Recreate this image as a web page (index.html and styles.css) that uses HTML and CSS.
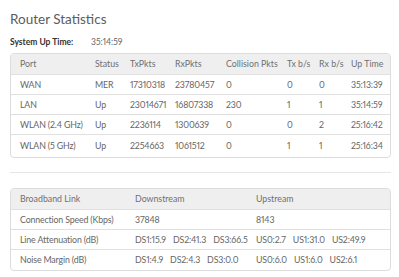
FILE: index.html
```html
<!DOCTYPE html>
<html>
<head>
<meta charset="utf-8">
<link rel="stylesheet" href="styles.css">
</head>
<body>
<div class="page">
  <h1 class="title">Router Statistics</h1>
  <div class="uptime"><span class="uptime-label">System Up Time:</span><span class="uptime-value num">35:14:59</span></div>
  <div class="box">
    <table class="grid ports">
      <colgroup>
        <col class="c1"><col class="c2"><col class="c3"><col class="c4"><col class="c5"><col class="c6"><col class="c7"><col class="c8">
      </colgroup>
      <thead>
        <tr><th>Port</th><th>Status</th><th>TxPkts</th><th>RxPkts</th><th>Collision Pkts</th><th>Tx b/s</th><th>Rx b/s</th><th>Up Time</th></tr>
      </thead>
      <tbody>
        <tr><td>WAN</td><td>MER</td><td>17310318</td><td>23780457</td><td>0</td><td>0</td><td>0</td><td>35:13:39</td></tr>
        <tr><td>LAN</td><td>Up</td><td>23014671</td><td>16807338</td><td>230</td><td>1</td><td>1</td><td>35:14:59</td></tr>
        <tr><td>WLAN (2.4 GHz)</td><td>Up</td><td>2236114</td><td>1300639</td><td>0</td><td>0</td><td>2</td><td>25:16:42</td></tr>
        <tr class="last"><td>WLAN (5 GHz)</td><td>Up</td><td>2254663</td><td>1061512</td><td>0</td><td>1</td><td>1</td><td>25:16:34</td></tr>
      </tbody>
    </table>
  </div>
  <hr class="sep">
  <div class="box">
    <table class="grid link">
      <colgroup>
        <col class="d1"><col class="d2"><col class="d3">
      </colgroup>
      <thead>
        <tr><th>Broadband Link</th><th>Downstream</th><th>Upstream</th></tr>
      </thead>
      <tbody>
        <tr><td>Connection Speed (Kbps)</td><td>37848</td><td>8143</td></tr>
        <tr><td>Line Attenuation (dB)</td><td><span class="v">DS1:15.9</span><span class="v">DS2:41.3</span><span class="v">DS3:66.5</span></td><td><span class="v">US0:2.7</span><span class="v">US1:31.0</span><span class="v">US2:49.9</span></td></tr>
        <tr class="last"><td>Noise Margin (dB)</td><td><span class="v">DS1:4.9</span><span class="v">DS2:4.3</span><span class="v">DS3:0.0</span></td><td><span class="v">US0:6.0</span><span class="v">US1:6.0</span><span class="v">US2:6.1</span></td></tr>
      </tbody>
    </table>
  </div>
</div>
</body>
</html>
```

FILE: styles.css
```css
* { box-sizing: border-box; }
html, body { margin: 0; padding: 0; background: #fff; }
body {
  font-family: Lato, "Liberation Sans", sans-serif;
  color: #5a5a5a;
  font-size: 8.8px;
  font-variant-numeric: proportional-nums;
}
.page { padding: 10px 8px 0 10px; width: 399px; }
.title {
  margin: 0;
  font-size: 13.5px;
  font-weight: normal;
  line-height: 18px;
  color: #5c5c5c;
}
.uptime {
  display: flex;
  margin-top: 8px;
  height: 12px;
  line-height: 12px;
  font-size: 8.5px;
}
.uptime-label { font-weight: bold; color: #333; width: 81px; }
.uptime-value { color: #666; }
.box {
  margin-top: 5px;
  border: 1px solid #dcdcdc;
  border-radius: 4px;
  overflow: hidden;
  width: 381px;
}
.grid {
  width: 100%;
  border-collapse: collapse;
  table-layout: fixed;
}
.grid th, .grid td {
  text-align: left;
  font-weight: normal;
  padding: 0 0 0 9px;
  height: 20px;
  white-space: nowrap;
  color: #666;
}
.grid td { letter-spacing: -0.15px; }
.grid th { background: #efefef; color: #707070; }
.grid tbody tr td { border-top: 1px solid #e0e0e0; }
.grid tr.last td { height: 23px; }
.link tr.last td { height: 21px; }
.c1 { width: 75px; }
.c2 { width: 35px; }
.c3 { width: 45px; }
.c4 { width: 51px; }
.c5 { width: 61px; }
.c6 { width: 32px; }
.c7 { width: 32px; }
.c8 { width: 50px; }
.d1 { width: 115px; }
.d2 { width: 121px; }
.d3 { width: 145px; }
.v { margin-right: 7px; }
.sep {
  margin: 14px 0 0 0;
  border: none;
  border-top: 1px solid #e6e6e6;
  width: 381px;
}
.sep + .box { margin-top: 15px; }
```
